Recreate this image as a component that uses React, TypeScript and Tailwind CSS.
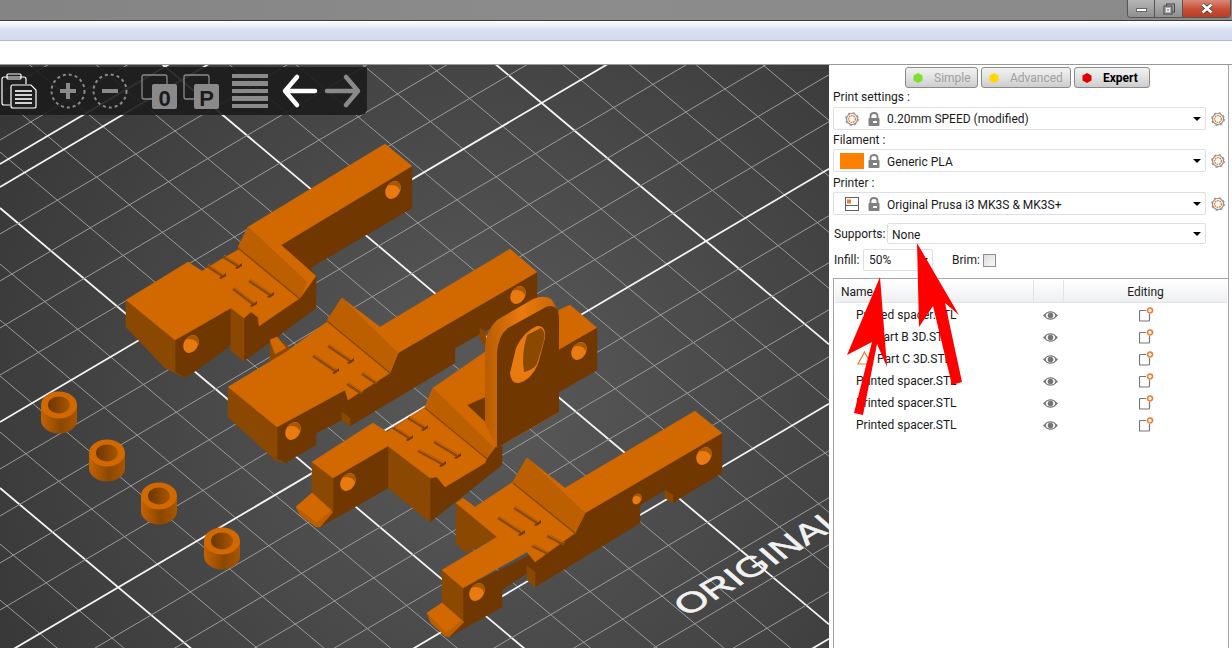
import type { ReactNode } from "react";

const TOP = "#d16900";
const CHAMFER = "#bb5f00";
const MED = "#8b4800";
const DARK = "#703800";

function P({ d, c }: { d: string; c: string }) {
  return <polygon points={d} fill={c} stroke={c} strokeWidth="0.5" />;
}

function Tick({ a, b }: { a: [number, number]; b: [number, number] }) {
  return (
    <g>
      <line x1={a[0]} y1={a[1] + 1} x2={b[0]} y2={b[1] + 1} stroke={MED} strokeWidth="2.5" />
      <line x1={a[0] + 1} y1={a[1] - 1} x2={b[0] + 1} y2={b[1] - 1} stroke="#b85d00" strokeWidth="1" />
      <polygon points={`${b[0] - 3},${b[1] + 3} ${b[0] + 4},${b[1] - 2} ${b[0] + 4},${b[1] + 1} ${b[0] - 1},${b[1] + 4}`} fill={DARK} />
    </g>
  );
}

function Hole({ x, y, s = 1 }: { x: number; y: number; s?: number }) {
  return (
    <g transform={`translate(${x} ${y}) rotate(32) scale(${s})`}>
      <ellipse rx="7" ry="9.5" fill="#e87a10" />
      <path d="M-7 0 A7 9.5 0 0 1 6.6 -3 A9 9 0 0 0 -7 0 Z" fill="#a85800" />
    </g>
  );
}

function Spacer({ x, y }: { x: number; y: number }) {
  return (
    <g>
      <path d={`M${x - 18} ${y} V${y + 15} A18 13.5 0 0 0 ${x + 18} ${y + 15} V${y} Z`} fill="url(#cyl)" />
      <ellipse cx={x} cy={y} rx="18" ry="13.5" fill={TOP} />
      <ellipse cx={x} cy={y} rx="11" ry="8.5" fill="url(#bore)" />
    </g>
  );
}

function Scene() {
  const aLines = Array.from({ length: 36 }, (_, i) => i - 16);
  const bLines = Array.from({ length: 32 }, (_, i) => i - 3);
  return (
    <svg width="829" height="583" viewBox="0 65 829 583" className="block">
      <defs>
        <radialGradient id="floor" gradientUnits="userSpaceOnUse" cx="480" cy="400" r="560">
          <stop offset="0" stopColor="#5a5a5a" />
          <stop offset="1" stopColor="#373737" />
        </radialGradient>
        <linearGradient id="cyl" x1="0" x2="1" y1="0" y2="0">
          <stop offset="0" stopColor="#c46200" />
          <stop offset="0.55" stopColor="#8b4800" />
          <stop offset="1" stopColor="#a85600" />
        </linearGradient>
        <linearGradient id="bore" x1="0" x2="1" y1="0" y2="0">
          <stop offset="0" stopColor="#6b3600" />
          <stop offset="1" stopColor="#a85600" />
        </linearGradient>
        <linearGradient id="rim" x1="0" x2="1" y1="0" y2="0">
          <stop offset="0" stopColor="#b85d00" />
          <stop offset="0.5" stopColor="#e87a10" />
          <stop offset="1" stopColor="#c96500" />
        </linearGradient>
      </defs>
      <rect x="0" y="65" width="829" height="583" fill="url(#floor)" />
      {aLines.map((k) => {
        const major = ((k % 5) + 5) % 5 === 0;
        const c = 208 + 56 * k;
        return (
          <line key={`a${k}`} x1="0" y1={c} x2="829" y2={c + 0.84 * 829} stroke={major ? "#f4f4f4" : "#9c9c9c"} strokeWidth={major ? 1.8 : 1} />
        );
      })}
      {bLines.map((k) => {
        const major = ((k % 5) + 5) % 5 === 0;
        const c = 187 + 47 * k;
        return (
          <line key={`b${k}`} x1="0" y1={c} x2="829" y2={c - 0.589 * 829} stroke={major ? "#f4f4f4" : "#9c9c9c"} strokeWidth={major ? 1.8 : 1} />
        );
      })}
      <line x1="0" y1="164" x2="200" y2="46" stroke="#f4f4f4" strokeWidth="1.8" />

      <text transform="matrix(.86,-.51,.62,.55,687,617)" fill="#f2f2f2" stroke="#f2f2f2" strokeWidth="0.7" fontSize="39" fontFamily="Liberation Sans, sans-serif">ORIGINAL</text>

      <Spacer x={59} y={405} />
      <Spacer x={107} y={453} />
      <Spacer x={159} y={496} />
      <Spacer x={222} y={541} />

      {/* part 1 */}
      <P c={DARK} d="281,245 412,166 412,208 310,268 316,276" />
      <P c={DARK} d="244,318 251,312 258,317 259,326 300,298 316,276 316,308 244,361" />
      <P c={DARK} d="175,340 231,308 231,345 190,375 183,377 175,372" />
      <P c={MED} d="126,300 175,340 175,372 183,377 165,368 126,327" />
      <P c={MED} d="231,308 244,318 244,361 231,351" />
      <P c={TOP} d="385,144 412,166 281,245 316,276 300,298 259,326 258,317 251,312 244,318 231,308 175,340 126,300 188,262 202,271 220,260 238,250 248,227" />
      <P c={CHAMFER} d="248,227 307,282 300,298 238,247" />
      <line x1="238" y1="248" x2="300" y2="299" stroke={MED} strokeWidth="1.5" />
      <Hole x={393} y={190} />
      <Hole x={191} y={344} />
      <Tick a={[233, 288]} b={[253, 303]} />
      <Tick a={[249, 280]} b={[270, 294]} />
      <Tick a={[207, 265]} b={[222, 275]} />
      <Tick a={[223, 256]} b={[238, 265]} />

      {/* part 2 */}
      <P c={MED} d="270,340 277,337 292,350 280,358 270,362" />
      <P c={TOP} d="270,340 277,337 286,348 275,354" />
      <P c={DARK} d="398,353 537,272 537,302 455,348 455,363 350,426 342,420 342,412 348,400 390,373" />
      <P c={DARK} d="277,427 345,390 348,400 342,412 342,420 316,433 316,445 285,463 277,459" />
      <P c={MED} d="228,387 277,427 277,459 285,463 275,460 228,417" />
      <P c={MED} d="342,412 350,418 350,426 342,420" />
      <P c={TOP} d="510,249 537,272 398,353 390,373 348,400 345,390 277,427 228,387 286,352 327,322 342,298 380,327" />
      <P c={CHAMFER} d="342,298 398,353 390,372 327,320" />
      <line x1="327" y1="321" x2="390" y2="373" stroke={MED} strokeWidth="1.5" />
      <Hole x={518} y={295} />
      <Hole x={293} y={431} />
      <Tick a={[313, 355]} b={[335, 370]} />
      <Tick a={[328, 345]} b={[350, 360]} />
      <Tick a={[347, 383]} b={[362, 393]} />
      <Tick a={[362, 373]} b={[377, 383]} />

      {/* part 3 */}
      <P c={MED} d="480,328 486,332 486,345 480,340" />
      <P c={DARK} d="467,405 497,388 497,440 487,432" />
      <P c={DARK} d="502,438 502,465 430,522 430,478 437,477 445,487 485,463 487,458" />
      <P c={MED} d="388,446 430,478 430,522 388,488" />
      <P c={DARK} d="333,478 388,446 388,488 355,507 320,527 333,507" />
      <P c={MED} d="312,462 333,478 333,510 325,515 312,493" />
      <P c={CHAMFER} d="296,507 300,515 316,527 320,527 333,512 312,493" />
      <P c={TOP} d="296,507 312,493 331,510 322,518 316,522 302,511" />
      <P c={TOP} d="485,352 485,397 467,405 502,438 487,458 485,463 445,487 437,477 430,478 388,446 333,478 312,462 373,423 387,432 400,423 425,407 433,388" />
      <P c={CHAMFER} d="433,388 493,447 487,458 425,407" />
      <line x1="425" y1="408" x2="487" y2="459" stroke={MED} strokeWidth="1.5" />
      <Hole x={348} y={482} />
      <Tick a={[393, 427]} b={[409, 437]} />
      <Tick a={[408, 417]} b={[424, 427]} />
      <Tick a={[418, 450]} b={[442, 463]} />
      <Tick a={[434, 441]} b={[457, 455]} />
      {/* loop bracket */}
      <P c={TOP} d="559,310 570,305 597,328 559,350" />
      <P c={DARK} d="559,350 597,328 597,370 559,392" />
      <path d="M485 423 V347 Q486 330 497 320 L533 299 Q545 294 552 300 L559 313 V412 L497 448 Z" fill="url(#rim)" />
      <path d="M497 353 Q498 336 508 328 L546 307 Q558 303 559 317 V412 L497 448 Z" fill={DARK} />
      <path d="M510 373 Q511 384 519 383 Q531 380 538 364 L545 338 Q546 325 537 326 Q524 331 516 348 Z" fill="#e87a10" />
      <path d="M527 335 L541 328 Q546 332 544 340 L537 364 Q533 370 524 372 Q521 355 527 335 Z" fill={MED} />
      <Hole x={579} y={351} />

      {/* part 4 */}
      <P c={DARK} d="463,588 575,533 585,513 722,433 722,473 680,498 673,503 665,490 640,505 640,523 535,587 527,573 502,590 502,607 449,637 463,620" />
      <P c={MED} d="665,490 673,495 673,503 665,498" />
      <P c={MED} d="527,566 535,572 535,587 527,580" />
      <P c={MED} d="442,570 463,588 463,622 442,603" />
      <P c={CHAMFER} d="427,613 431,623 445,636 449,637 464,622 442,603" />
      <P c={TOP} d="427,613 442,603 461,620 452,628 446,632 433,619" />
      <P c={MED} d="456,503 497,537 466,553 456,543" />
      <P c={TOP} d="695,411 722,433 585,513 575,533 535,562 527,552 463,588 442,570 497,537 456,503 463,498 475,507 513,482 527,458 565,488" />
      <P c={CHAMFER} d="527,458 585,513 575,533 513,482" />
      <line x1="513" y1="483" x2="576" y2="534" stroke={MED} strokeWidth="1.5" />
      <Hole x={704} y={456} />
      <Hole x={477} y={592} />
      <Hole x={637} y={499} s={0.6} />
      <Tick a={[498, 517]} b={[521, 532]} />
      <Tick a={[514, 507]} b={[537, 522]} />
      <Tick a={[532, 545]} b={[548, 553]} />
      <Tick a={[547, 535]} b={[564, 544]} />
    </svg>
  );
}

function Toolbar() {
  const gray = "#8a8a8a";
  return (
    <div className="absolute left-0 top-[2px] w-[367px] h-[48px] bg-[#1c1c1c]/90 rounded-br-md">
      <svg width="367" height="48" viewBox="0 67 367 48">
        {/* clipboard */}
        <g fill="none" stroke="#fff" strokeWidth="1.2">
          <path d="M10 105 H4 Q2 105 2 103 V79 Q2 77 4 77 H24 Q26 77 26 79 V84" />
          <rect x="7" y="74" width="14" height="5" rx="1" />
          <path d="M12 85 H31 L36 90 V107 Q36 108 34 108 H13 Q11 108 11 106 V87 Q11 85 12 85 Z" />
        </g>
        <g stroke="#fff" strokeWidth="1.6">
          <line x1="15" y1="91" x2="32" y2="91" />
          <line x1="15" y1="95" x2="32" y2="95" />
          <line x1="15" y1="99" x2="32" y2="99" />
          <line x1="15" y1="103" x2="32" y2="103" />
        </g>
        {/* plus / minus */}
        <circle cx="68" cy="91" r="16.5" fill="none" stroke={gray} strokeWidth="2" strokeDasharray="3 3" />
        <path d="M68 83 V99 M60 91 H76" stroke={gray} strokeWidth="4" />
        <circle cx="110" cy="91" r="16.5" fill="none" stroke={gray} strokeWidth="2" strokeDasharray="3 3" />
        <path d="M102 91 H118" stroke={gray} strokeWidth="4" />
        {/* copy 0 */}
        <path d="M152 99 H144 Q142 99 142 97 V77 Q142 75 144 75 H165 Q167 75 167 77 V84" fill="none" stroke={gray} strokeWidth="1.3" />
        <rect x="152" y="84" width="25" height="25" rx="2" fill={gray} />
        <text x="164.5" y="106" textAnchor="middle" fontSize="22" fontWeight="700" fontFamily="Liberation Sans, sans-serif" fill="#1c1c1c">0</text>
        {/* copy P */}
        <path d="M194 99 H186 Q184 99 184 97 V77 Q184 75 186 75 H207 Q209 75 209 77 V84" fill="none" stroke={gray} strokeWidth="1.3" />
        <rect x="194" y="84" width="25" height="25" rx="2" fill={gray} />
        <text x="206.5" y="106" textAnchor="middle" fontSize="22" fontWeight="700" fontFamily="Liberation Sans, sans-serif" fill="#1c1c1c">P</text>
        {/* layers */}
        <g fill={gray}>
          <rect x="232" y="74" width="36" height="4" />
          <rect x="232" y="81" width="36" height="5" />
          <rect x="232" y="89" width="36" height="4" />
          <rect x="232" y="96" width="36" height="5" />
          <rect x="232" y="104" width="36" height="4" />
        </g>
        {/* undo redo */}
        <path d="M315 91 H286 M297 77 L285 91 L297 105" fill="none" stroke="#fff" strokeWidth="4.5" strokeLinecap="round" strokeLinejoin="round" />
        <path d="M327 91 H357 M346 77 L358 91 L346 105" fill="none" stroke={gray} strokeWidth="4.5" strokeLinecap="round" strokeLinejoin="round" />
      </svg>
    </div>
  );
}

function Gear() {
  return (
    <svg width="14" height="14" viewBox="0 0 16 16" className="shrink-0">
      <circle cx="8" cy="8" r="6.3" fill="#fff" stroke="#8f8f8f" strokeWidth="1.4" />
      <circle cx="8" cy="8" r="7.2" fill="none" stroke="#8f8f8f" strokeWidth="1.3" strokeDasharray="2.8 2.85" />
      <circle cx="8" cy="8" r="3.9" fill="#fff" stroke="#ed7d31" strokeWidth="1.6" strokeDasharray="2 0.8" />
    </svg>
  );
}

function Lock() {
  return (
    <svg width="12" height="14" viewBox="0 0 12 14" className="shrink-0">
      <path d="M2.5 6 V4 Q2.5 1 6 1 Q9.5 1 9.5 4 V6" fill="none" stroke="#808080" strokeWidth="1.8" />
      <rect x="0.5" y="6" width="11" height="8" rx="1" fill="#808080" />
      <rect x="5" y="9" width="4" height="2" fill="#fff" />
    </svg>
  );
}

function PrinterIcon() {
  return (
    <svg width="14" height="14" viewBox="0 0 14 14" className="shrink-0">
      <rect x="0.5" y="0.5" width="13" height="13" fill="#fff" stroke="#606060" />
      <line x1="0.5" y1="8.5" x2="13.5" y2="8.5" stroke="#606060" />
      <rect x="2" y="2.5" width="4" height="4" fill="#ed7d31" />
    </svg>
  );
}

function Eye() {
  return (
    <svg width="15" height="11" viewBox="0 0 15 11">
      <path d="M0 5.5 Q7.5 -3 15 5.5 Q7.5 14 0 5.5 Z" fill="#757575" />
      <ellipse cx="7.5" cy="5.5" rx="4.6" ry="3" fill="#fff" />
      <circle cx="7.5" cy="5.5" r="2.8" fill="#757575" />
    </svg>
  );
}

function EditIcon() {
  return (
    <svg width="15" height="15" viewBox="0 0 15 15">
      <path d="M7 3.5 H1.5 Q0.5 3.5 0.5 4.5 V13 Q0.5 14 1.5 14 H9.5 Q10.5 14 10.5 13 V7" fill="none" stroke="#777" strokeWidth="1.2" />
      <circle cx="11" cy="3.5" r="2.5" fill="#fff" stroke="#ed7d31" strokeWidth="1.7" />
    </svg>
  );
}

function Caret() {
  return <span className="w-0 h-0 border-x-[4px] border-x-transparent border-t-[4px] border-t-black" />;
}

function Combo({ children, label, labelClass }: { children: ReactNode; label: string; labelClass: string }) {
  return (
    <div>
      <div className={labelClass + " pl-[4px] text-[#1a1a1a]"}>{label}</div>
      <div className="flex items-center">
        <div className="ml-[4px] w-[373px] h-[23px] border border-[#dcdfe4] rounded-[2px] flex items-center pl-[11px] pr-[4px]">
          <div className="flex-1 flex items-center">{children}</div>
          <Caret />
        </div>
        <div className="ml-[5px]">
          <Gear />
        </div>
      </div>
    </div>
  );
}

function Hex({ color }: { color: string }) {
  return (
    <svg width="10" height="10" viewBox="0 0 10 10" className="shrink-0">
      <polygon points="5,0 9.5,2.5 9.5,7.5 5,10 0.5,7.5 0.5,2.5" fill={color} />
    </svg>
  );
}

function ModeButton({ color, label, active, w }: { color: string; label: string; active?: boolean; w: string }) {
  return (
    <div className={"h-[21px] border border-[#8a8a8a] rounded-[3px] flex items-center pl-[7px] gap-[11px] bg-gradient-to-b from-[#f2f2f2] via-[#e2e2e2] to-[#cdcdcd] " + w + (active ? " font-bold text-black" : " text-[#a0a0a0]")}>
      <Hex color={color} />
      {label}
    </div>
  );
}

const rows = [
  { name: "Printed spacer.STL", left: 21 },
  { name: "Part B 3D.STL", left: 41, warn: true },
  { name: "Part C 3D.STL", left: 42, warn: true },
  { name: "Printed spacer.STL", left: 21 },
  { name: "Printed spacer.STL", left: 21 },
  { name: "Printed spacer.STL", left: 21 },
];

function Sidebar() {
  return (
    <div className="flex-1 bg-white text-[12px] font-['Roboto',sans-serif] border-r border-[#a5a5a5] mr-[3px] relative">
      <div className="flex gap-[3px] mt-[2px] pl-[76px]">
        <ModeButton color="#7ee02c" label="Simple" w="w-[73px]" />
        <ModeButton color="#ffd800" label="Advanced" w="w-[90px]" />
        <ModeButton color="#e00000" label="Expert" w="w-[76px]" active />
      </div>
      <Combo label="Print settings :" labelClass="h-[19px] leading-[18px]">
        <span className="w-[22px] flex"><Gear /></span>
        <span className="w-[20px] flex pl-[1px]"><Lock /></span>
        <span className="text-[#1a1a1a]">0.20mm SPEED (modified)</span>
      </Combo>
      <Combo label="Filament :" labelClass="h-[19px] leading-[20px]">
        <span className="w-[24px] h-[16px] bg-[#ff8000] ml-[-5px] mr-[3px]" />
        <span className="w-[20px] flex pl-[1px]"><Lock /></span>
        <span className="text-[#1a1a1a] pt-[2px]">Generic PLA</span>
      </Combo>
      <Combo label="Printer :" labelClass="h-[20px] leading-[22px]">
        <span className="w-[22px] flex"><PrinterIcon /></span>
        <span className="w-[20px] flex pl-[1px]"><Lock /></span>
        <span className="text-[#1a1a1a] pt-[2px]">Original Prusa i3 MK3S &amp; MK3S+</span>
      </Combo>
      <div className="flex items-center mt-[8px] pl-[5px] h-[21px]">
        <span className="w-[53px] text-[#1a1a1a]">Supports:</span>
        <div className="w-[319px] h-[21px] border border-[#dcdfe4] rounded-[2px] flex items-center pl-[4px] pr-[4px] justify-between">
          <span className="text-[#1a1a1a] pt-[2px]">None</span>
          <Caret />
        </div>
      </div>
      <div className="flex items-center mt-[5px] pl-[5px] h-[22px]">
        <span className="w-[29px] text-[#1a1a1a]">Infill:</span>
        <div className="w-[70px] h-[22px] border border-[#dcdfe4] rounded-[2px] flex items-center pl-[5px] pr-[4px] justify-between">
          <span className="text-[#1a1a1a]">50%</span>
          <Caret />
        </div>
        <span className="ml-[19px] w-[31px] text-[#1a1a1a]">Brim:</span>
        <span className="w-[13px] h-[13px] border border-[#8e8e8e] bg-gradient-to-br from-[#dcdcdc] to-[#f8f8f8]" />
      </div>
      <div className="mt-[7px] ml-[4px] h-[400px] border border-[#a5a5a5] border-r-0 px-[1px] pt-[1px]">
        <div className="h-[23px] flex items-center bg-gradient-to-b from-white to-[#eeeff1] border-b border-[#e3e3e3] text-[#1a1a1a]">
          <span className="w-[199px] pl-[6px] h-full border-r border-[#e3e3e3] leading-[25px]">Name</span>
          <span className="w-[30px] h-full border-r border-[#e3e3e3]" />
          <span className="flex-1 text-center pt-[2px]">Editing</span>
        </div>
        {rows.map((r, i) => (
          <div key={i} className="h-[22px] flex items-center text-[#1a1a1a] relative">
            <span className="w-[200px] pt-[2px]" style={{ paddingLeft: r.left }}>{r.name}</span>
            {r.warn && (
              <svg width="15" height="14" viewBox="0 0 15 14" className="absolute left-[22px] top-[4px]">
                <path d="M7.5 1 L14 13 H1 Z" fill="none" stroke="#ed7d31" strokeWidth="1.2" />
              </svg>
            )}
            <span className="w-[30px] flex justify-center pt-[2px]"><Eye /></span>
            <span className="flex-1 flex justify-center"><EditIcon /></span>
          </div>
        ))}
      </div>
    </div>
  );
}

function Arrows() {
  return (
    <svg width="1232" height="648" viewBox="0 0 1232 648" className="absolute left-0 top-0 pointer-events-none">
      <polygon points="880,277 847,355 872,342 854,413 863,415 877,344 887,367" fill="#fe0000" />
      <polygon points="917,243 919,327 933,306 952,385 962,382 945,303 959,315" fill="#fe0000" />
    </svg>
  );
}

export default function App() {
  return (
    <div className="w-[1232px] h-[648px] relative overflow-hidden bg-white">
      {/* window chrome */}
      <div className="h-[20px] bg-gradient-to-r from-[#848484] via-[#8c8c8c] to-[#8a8a8a] relative">
        <div className="absolute right-[1px] top-0 w-[104px] h-[18px] flex rounded-b-[4px] border border-t-0 border-[#555] overflow-hidden">
          <div className="w-[27px] border-r border-[#555] bg-gradient-to-b from-[#b5b5b5] to-[#8f8f8f] flex items-center justify-center">
            <span className="w-[11px] h-[4px] mt-[3px] bg-white border border-[#666]" />
          </div>
          <div className="w-[28px] border-r border-[#555] bg-gradient-to-b from-[#b5b5b5] to-[#8f8f8f] flex items-center justify-center">
            <svg width="12" height="12" viewBox="0 0 12 12">
              <rect x="3.5" y="1" width="8" height="8" fill="none" stroke="#444" />
              <rect x="1" y="3" width="8" height="8" fill="#aaa" stroke="#444" />
              <rect x="3.5" y="5.5" width="3" height="3" fill="none" stroke="#eee" />
            </svg>
          </div>
          <div className="flex-1 bg-gradient-to-b from-[#d98a78] via-[#c9503a] to-[#b93d22] flex items-center justify-center">
            <svg width="14" height="11" viewBox="0 0 14 11">
              <path d="M2.5 1.5 L11.5 9.5 M11.5 1.5 L2.5 9.5" stroke="#333" strokeWidth="4" />
              <path d="M2.5 1.5 L11.5 9.5 M11.5 1.5 L2.5 9.5" stroke="#fff" strokeWidth="2.8" />
            </svg>
          </div>
        </div>
      </div>
      <div className="h-[1px] bg-[#3c3c3c]" />
      <div className="h-[20px] bg-gradient-to-b from-white via-[#d8dff0] to-[#d3daed] border-b border-[#b4bacb]" />
      <div className="h-[23px] bg-white" />
      <div className="h-[1px] bg-[#9a9a9a]" />

      <div className="flex h-[583px]">
        <div className="relative w-[829px] shrink-0 overflow-hidden">
          <Scene />
          <Toolbar />
        </div>
        <Sidebar />
      </div>
      <Arrows />
    </div>
  );
}
